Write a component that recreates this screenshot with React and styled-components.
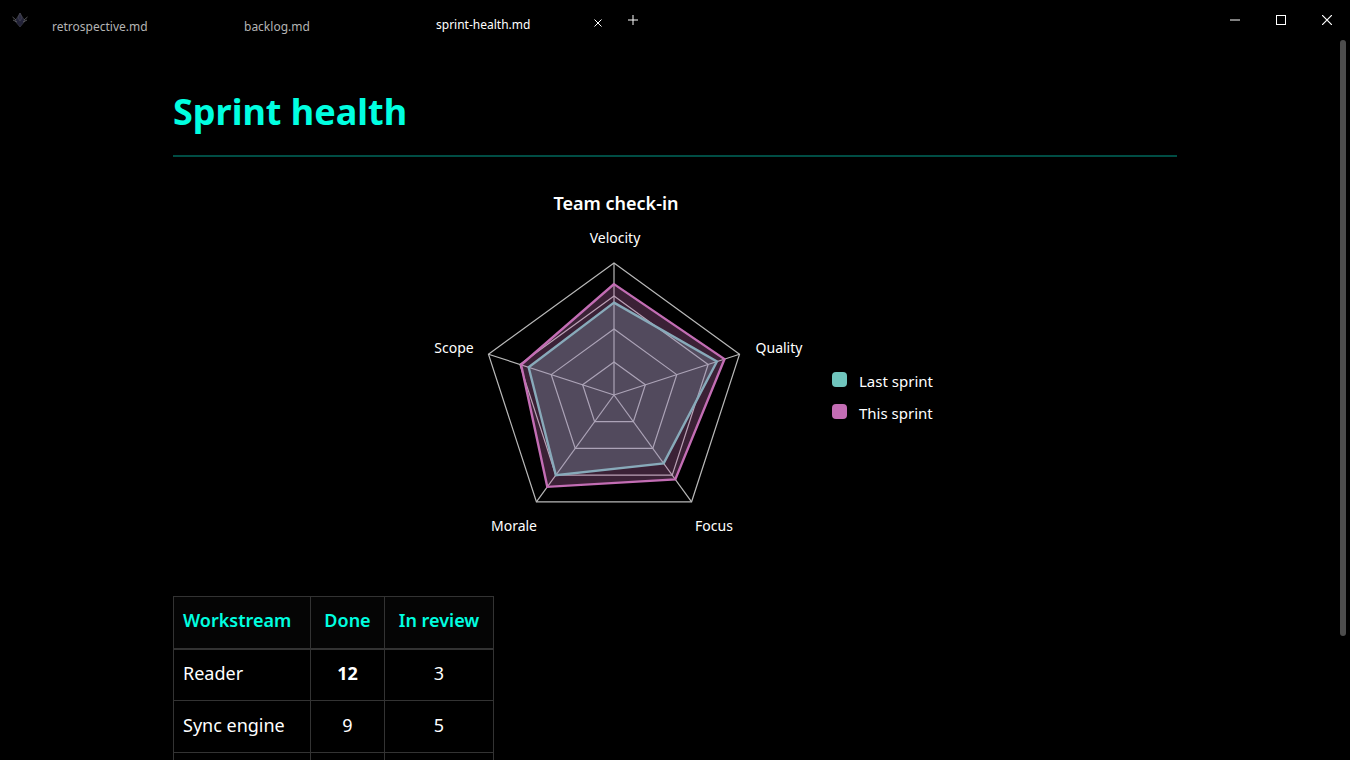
import React, { useState } from "react";
import styled, { createGlobalStyle } from "styled-components";

const GlobalStyle = createGlobalStyle`
  * {
    box-sizing: border-box;
  }
  body {
    margin: 0;
    background: #000;
    color: #fff;
    font-family: "Noto Sans", "Open Sans", sans-serif;
  }
  button {
    font: inherit;
    color: inherit;
    background: none;
    border: none;
    padding: 0;
    cursor: pointer;
  }
`;

const Window = styled.div`
  display: flex;
  flex-direction: column;
  height: 100vh;
  position: relative;
  overflow: hidden;
`;

const TitleBar = styled.header`
  display: flex;
  align-items: center;
  height: 40px;
  flex: none;
`;

const Logo = styled.svg`
  width: 16px;
  height: 16px;
  margin: 0 12px;
  flex: none;
`;

const Tabs = styled.nav`
  display: flex;
  height: 100%;
`;

const Tab = styled.div`
  display: flex;
  align-items: flex-start;
  width: 192px;
  padding: ${({ $active }) => ($active ? "15px 12px 0" : "17px 12px 0")};
  font-size: 12px;
  color: ${({ $active }) => ($active ? "#fff" : "#b4b4b4")};
`;

const TabName = styled.button`
  flex: 1;
  text-align: left;
  line-height: 20px;
`;

const IconButton = styled.button`
  display: flex;
  align-items: center;
  justify-content: center;
  width: ${({ $width }) => $width}px;
  height: ${({ $height }) => $height}px;
  svg {
    fill: none;
    stroke: currentColor;
  }
`;

const WindowControls = styled.div`
  display: flex;
  margin-left: auto;
`;

const Page = styled.main`
  flex: 1;
  min-height: 0;
  overflow: auto;
  scrollbar-width: none;
`;

const ScrollThumb = styled.div`
  position: absolute;
  top: 40px;
  right: 4px;
  width: 6px;
  height: 596px;
  border-radius: 3px;
  background: #4d4d4d;
`;

const Article = styled.article`
  max-width: 1100px;
  margin: 0 auto;
  padding: 44px 48px;
`;

const Title = styled.h1`
  margin: 0;
  padding-bottom: 15px;
  border-bottom: 2px solid #004d44;
  color: #00ffe0;
  font-size: 36px;
  font-weight: 700;
  line-height: 56px;
`;

const Figure = styled.figure`
  display: grid;
  grid-template-columns: 400px auto;
  gap: 6px 18px;
  justify-content: center;
  align-items: center;
  margin: 33px 0 24px;
`;

const Caption = styled.figcaption`
  grid-column: 1;
  padding-left: 4px;
  font-size: 18px;
  font-weight: 600;
  line-height: 26px;
  text-align: center;
`;

const Chart = styled.svg`
  grid-column: 1;
  width: 100%;
  height: 350px;
  text {
    fill: #fff;
    font-size: 14px;
    text-anchor: middle;
  }
`;

const Legend = styled.ul`
  grid-column: 2;
  min-width: 104px;
  list-style: none;
  margin: 0;
  padding: 0;
`;

const LegendItem = styled.li`
  display: flex;
  align-items: center;
  gap: 12px;
  height: 32px;
  font-size: 15px;
  &::before {
    content: "";
    width: 15px;
    height: 15px;
    margin-bottom: 4px;
    border-radius: 4px;
    background: ${({ $color }) => $color};
  }
`;

const Table = styled.table`
  border-collapse: collapse;
  font-size: 18px;
  line-height: 26px;
`;

const Cell = styled.td`
  height: 52px;
  padding: 0 9px 4px;
  border: 1px solid #333;
  text-align: ${({ $left }) => ($left ? "left" : "center")};
  font-weight: ${({ $strong }) => ($strong ? 700 : 400)};
`;

const HeadCell = styled(Cell)`
  width: ${({ $width }) => $width}px;
  border-bottom: 2px solid #333;
  background: #050505;
  color: #00ffe0;
  font-weight: 600;
`;

const tabs = ["retrospective.md", "backlog.md", "sprint-health.md"];

const axes = [
  { name: "Velocity", x: 201, y: 21 },
  { name: "Quality", x: 365, y: 131 },
  { name: "Focus", x: 300, y: 309 },
  { name: "Morale", x: 100, y: 309 },
  { name: "Scope", x: 40, y: 131 },
];

const series = [
  { name: "Last sprint", values: [70, 82, 64, 75, 68], color: "#6fc5bd" },
  { name: "This sprint", values: [84, 88, 79, 86, 74], color: "#c36db4" },
];

const workstreams = [
  { name: "Reader", done: 12, review: 3, best: true },
  { name: "Sync engine", done: 9, review: 5 },
  { name: "Editor", done: 7, review: 2 },
];

const CX = 200;
const CY = 173;
const RADIUS = 132;

const point = (index, value) => {
  const angle = (index * 2 * Math.PI) / axes.length;
  const r = (RADIUS * value) / 100;
  return `${CX + r * Math.sin(angle)},${CY - r * Math.cos(angle)}`;
};

const polygon = (values) => values.map((value, i) => point(i, value)).join(" ");

function RadarChart() {
  return (
    <Chart viewBox="0 0 400 350" role="img" aria-label="Team check-in">
      <g fill="none" stroke="#b8b8b8" strokeWidth="1.2">
        {[25, 50, 75, 100].map((level) => (
          <polygon key={level} points={polygon(axes.map(() => level))} />
        ))}
        {axes.map((axis, i) => (
          <path key={axis.name} d={`M${CX},${CY} L${point(i, 100)}`} />
        ))}
      </g>
      {series.map(({ name, values, color }) => (
        <polygon
          key={name}
          points={polygon(values)}
          fill={color}
          fillOpacity="0.3"
          stroke={color}
          strokeWidth="2.4"
        />
      ))}
      {axes.map((axis) => (
        <text key={axis.name} x={axis.x} y={axis.y}>
          {axis.name}
        </text>
      ))}
    </Chart>
  );
}

export default function App() {
  const [active, setActive] = useState("sprint-health.md");

  return (
    <>
      <GlobalStyle />
      <Window>
        <TitleBar>
          <Logo viewBox="0 0 16 16" aria-hidden="true">
            <path d="M8 1 L11 6 L13 9 L8 15 L3 9 L5 6Z" fill="#222238" stroke="#3c3c46" strokeWidth="0.7" />
            <path d="M8 1 L6 6 L8 9 L10 6Z" fill="#2c2c44" stroke="#505056" strokeWidth="0.5" />
            <path d="M0.5 5 L4 8 M1 8 L5 10 M15.5 5 L12 8 M15 8 L11 10" stroke="#606062" strokeWidth="0.9" />
          </Logo>
          <Tabs>
            {tabs.map((name) => (
              <Tab key={name} $active={name === active}>
                <TabName onClick={() => setActive(name)}>{name}</TabName>
                {name === active && (
                  <IconButton $width={12} $height={16} aria-label="Close tab">
                    <svg width="8" height="8" viewBox="0 0 8 8">
                      <path d="M0.5 0.5 L7.5 7.5 M7.5 0.5 L0.5 7.5" />
                    </svg>
                  </IconButton>
                )}
              </Tab>
            ))}
          </Tabs>
          <IconButton $width={34} $height={40} aria-label="New tab">
            <svg width="10" height="10" viewBox="0 0 10 10">
              <path d="M5 0 V10 M0 5 H10" />
            </svg>
          </IconButton>
          <WindowControls>
            <IconButton $width={46} $height={40} aria-label="Minimize">
              <svg width="10" height="10" viewBox="0 0 10 10">
                <path d="M0 5 H10" />
              </svg>
            </IconButton>
            <IconButton $width={46} $height={40} aria-label="Maximize">
              <svg width="10" height="10" viewBox="0 0 10 10">
                <rect x="0.5" y="0.5" width="9" height="9" />
              </svg>
            </IconButton>
            <IconButton $width={46} $height={40} aria-label="Close">
              <svg width="10" height="10" viewBox="0 0 10 10">
                <path d="M0 0 L10 10 M10 0 L0 10" strokeWidth="1.2" />
              </svg>
            </IconButton>
          </WindowControls>
        </TitleBar>

        <Page>
          <Article>
            <Title>Sprint health</Title>
            <Figure>
              <Caption>Team check-in</Caption>
              <RadarChart />
              <Legend>
                {series.map((item) => (
                  <LegendItem key={item.name} $color={item.color}>
                    {item.name}
                  </LegendItem>
                ))}
              </Legend>
            </Figure>
            <Table>
              <thead>
                <tr>
                  <HeadCell as="th" scope="col" $left $width={137}>Workstream</HeadCell>
                  <HeadCell as="th" scope="col" $width={74}>Done</HeadCell>
                  <HeadCell as="th" scope="col" $width={109}>In review</HeadCell>
                </tr>
              </thead>
              <tbody>
                {workstreams.map((row) => (
                  <tr key={row.name}>
                    <Cell $left>{row.name}</Cell>
                    <Cell $strong={row.best}>{row.done}</Cell>
                    <Cell>{row.review}</Cell>
                  </tr>
                ))}
              </tbody>
            </Table>
          </Article>
        </Page>
        <ScrollThumb />
      </Window>
    </>
  );
}
